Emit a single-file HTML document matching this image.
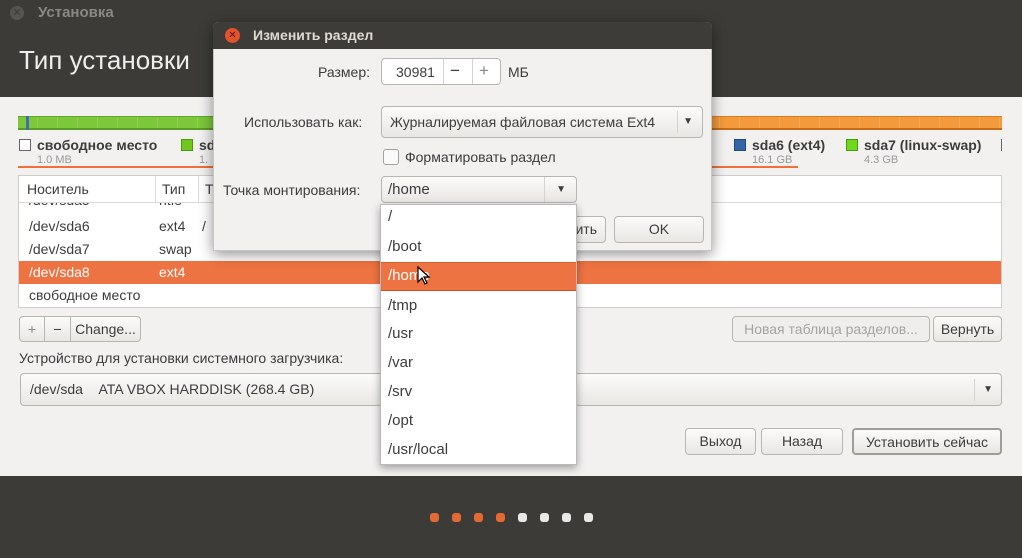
<!DOCTYPE html>
<html><head><meta charset="utf-8"><style>
*{margin:0;padding:0;box-sizing:border-box}
body{width:1022px;height:558px;overflow:hidden;background:#f2f1f0;font-family:"Liberation Sans","DejaVu Sans",sans-serif;font-size:14px;color:#3c3c3c;position:relative}
.a{position:absolute;white-space:nowrap}
.btn{position:absolute;border:1px solid #b9b6b1;border-radius:4px;background:linear-gradient(#fbfbfa,#e9e7e4);text-align:center;font-size:14px;color:#3c3c3c}
.row{position:absolute;left:19px;width:982px;height:23px;line-height:23px}
.it{position:absolute;left:8px;font-size:15px}
</style></head><body>
<div class="a" style="left:0;top:0;width:1022px;height:97px;background:#3c3b37"></div>
<div class="a" style="left:10px;top:6px;width:14px;height:14px;border-radius:50%;background:#56554f;color:#3c3b37;font-size:11px;line-height:14px;text-align:center">✕</div>
<div class="a" style="left:38px;top:4px;color:#8a8884;font-weight:bold;font-size:15px">Установка</div>
<div class="a" style="left:19px;top:45px;color:#eeeeec;font-size:26px">Тип установки</div>

<div class="a" style="left:18px;top:116px;width:200px;height:14px;background:repeating-linear-gradient(90deg,#7cc83a 0 19px,#8fd050 19px 20px);border-top:1px solid #5ea82a;border-bottom:2px solid #5a9a2a"></div>
<div class="a" style="left:26px;top:116px;width:3px;height:14px;background:#3f6db0"></div>
<div class="a" style="left:700px;top:116px;width:302px;height:14px;background:repeating-linear-gradient(90deg,#f39a3c 0 19px,#f5a850 19px 20px);border-top:1px solid #e07c20;border-bottom:2px solid #c66a1a"></div>

<div class="a" style="left:19px;top:139px;width:12px;height:12px;border:1px solid #666;background:#fff"></div>
<div class="a" style="left:37px;top:137px;font-weight:bold;font-size:14px;color:#3c3c3c">свободное место</div>
<div class="a" style="left:37px;top:154px;font-size:11px;color:#999">1.0 MB</div>
<div class="a" style="left:181px;top:139px;width:12px;height:12px;background:#72c71e;border:1px solid #4a9a10"></div>
<div class="a" style="left:199px;top:137px;font-weight:bold">sd</div>
<div class="a" style="left:199px;top:154px;font-size:11px;color:#999">1.</div>
<div class="a" style="left:734px;top:139px;width:12px;height:12px;background:#3465a4;border:1px solid #204a87"></div>
<div class="a" style="left:752px;top:137px;font-weight:bold">sda6 (ext4)</div>
<div class="a" style="left:752px;top:154px;font-size:11px;color:#999">16.1 GB</div>
<div class="a" style="left:846px;top:139px;width:12px;height:12px;background:#72d81e;border:1px solid #4a9a10"></div>
<div class="a" style="left:864px;top:137px;font-weight:bold">sda7 (linux-swap)</div>
<div class="a" style="left:864px;top:154px;font-size:11px;color:#999">4.3 GB</div>
<div class="a" style="left:1001px;top:139px;width:1px;height:12px;background:#666"></div>
<div class="a" style="left:18px;top:166px;width:780px;height:2px;background:#f0703a"></div>

<div class="a" style="left:18px;top:175px;width:984px;height:133px;background:#fff;border:1px solid #cfcdca"></div>
<div class="a" style="left:19px;top:176px;width:982px;height:27px;border-bottom:1px solid #dcdad6"></div>
<div class="a" style="left:155px;top:176px;width:1px;height:27px;background:#dcdad6"></div>
<div class="a" style="left:198px;top:176px;width:1px;height:27px;background:#dcdad6"></div>
<div class="a" style="left:27px;top:181px">Носитель</div>
<div class="a" style="left:162px;top:181px">Тип</div>
<div class="a" style="left:205px;top:181px">Т</div>
<div class="a" style="left:19px;top:203px;width:982px;height:8px;overflow:hidden"><div class="a" style="left:10px;top:-11px">/dev/sda5</div><div class="a" style="left:140px;top:-11px">ntfs</div></div>
<div class="row" style="top:215px"><span class="a" style="left:10px">/dev/sda6</span><span class="a" style="left:140px">ext4</span><span class="a" style="left:183px">/</span></div>
<div class="row" style="top:238px"><span class="a" style="left:10px">/dev/sda7</span><span class="a" style="left:140px">swap</span></div>
<div class="row" style="top:261px;background:#ee7343;color:#fff"><span class="a" style="left:10px">/dev/sda8</span><span class="a" style="left:140px">ext4</span></div>
<div class="row" style="top:284px"><span class="a" style="left:10px">свободное место</span></div>

<div class="btn" style="left:19px;top:316px;width:26px;height:26px;line-height:24px;color:#888;border-radius:4px 0 0 4px">+</div>
<div class="btn" style="left:44px;top:316px;width:27px;height:26px;line-height:24px;border-radius:0">−</div>
<div class="btn" style="left:70px;top:316px;width:71px;height:26px;line-height:24px;border-radius:0 4px 4px 0">Change...</div>
<div class="btn" style="left:732px;top:316px;width:198px;height:26px;line-height:24px;color:#a5a3a0;background:#efeeec">Новая таблица разделов...</div>
<div class="btn" style="left:933px;top:316px;width:69px;height:26px;line-height:24px">Вернуть</div>
<div class="a" style="left:19px;top:350px">Устройство для установки системного загрузчика:</div>
<div class="btn" style="left:20px;top:373px;width:982px;height:33px;text-align:left;line-height:31px;padding-left:9px">/dev/sda&nbsp;&nbsp;&nbsp;&nbsp;ATA VBOX HARDDISK (268.4 GB)<span class="a" style="right:8px;top:0;font-size:10px">▼</span><span class="a" style="right:26px;top:5px;width:1px;height:22px;background:#d5d3cf"></span></div>
<div class="btn" style="left:685px;top:428px;width:71px;height:27px;line-height:25px">Выход</div>
<div class="btn" style="left:761px;top:428px;width:82px;height:27px;line-height:25px">Назад</div>
<div class="btn" style="left:852px;top:428px;width:150px;height:27px;line-height:25px;border:2px solid #a09d98">Установить сейчас</div>

<div class="a" style="left:0;top:476px;width:1022px;height:82px;background:#3c3b37"></div>
<div class="a" style="left:430px;top:513px;width:9px;height:9px;border-radius:3px;background:#e36a33"></div>
<div class="a" style="left:452px;top:513px;width:9px;height:9px;border-radius:3px;background:#e36a33"></div>
<div class="a" style="left:474px;top:513px;width:9px;height:9px;border-radius:3px;background:#e36a33"></div>
<div class="a" style="left:496px;top:513px;width:9px;height:9px;border-radius:3px;background:#e36a33"></div>
<div class="a" style="left:518px;top:513px;width:9px;height:9px;border-radius:3px;background:#e8e8e6"></div>
<div class="a" style="left:540px;top:513px;width:9px;height:9px;border-radius:3px;background:#e8e8e6"></div>
<div class="a" style="left:562px;top:513px;width:9px;height:9px;border-radius:3px;background:#e8e8e6"></div>
<div class="a" style="left:584px;top:513px;width:9px;height:9px;border-radius:3px;background:#e8e8e6"></div>

<!-- dialog -->
<div class="a" style="left:213px;top:22px;width:499px;height:229px;background:#f2f1f0;border-radius:6px 6px 0 0;box-shadow:0 3px 14px rgba(0,0,0,.45);border:1px solid #c8c6c2;border-top:none"></div>
<div class="a" style="left:213px;top:22px;width:499px;height:27px;background:#3d3c38;border-radius:6px 6px 0 0"></div>
<div class="a" style="left:225px;top:28px;width:15px;height:15px;border-radius:50%;background:#e2522c;color:#5a1a0a;font-size:10px;line-height:15px;text-align:center">✕</div>
<div class="a" style="left:253px;top:27px;color:#dfdbd2;font-weight:bold;font-size:14px">Изменить раздел</div>
<div class="a" style="left:318px;top:64px">Размер:</div>
<div class="btn" style="left:381px;top:58px;width:120px;height:27px;background:#fff;border-color:#b9b6b1"></div>
<div class="a" style="left:396px;top:64px">30981</div>
<div class="a" style="left:443px;top:59px;width:1px;height:25px;background:#d5d3cf"></div>
<div class="a" style="left:472px;top:59px;width:1px;height:25px;background:#d5d3cf"></div>
<div class="a" style="left:450px;top:61px;font-size:17px">−</div>
<div class="a" style="left:479px;top:61px;font-size:17px;color:#888">+</div>
<div class="a" style="left:508px;top:64px">МБ</div>
<div class="a" style="left:244px;top:114px">Использовать как:</div>
<div class="btn" style="left:381px;top:106px;width:322px;height:32px;text-align:left;line-height:30px;padding-left:8px">Журналируемая файловая система Ext4<span class="a" style="right:9px;top:0;font-size:10px">▼</span><span class="a" style="right:24px;top:4px;width:1px;height:22px;background:#d5d3cf"></span></div>
<div class="a" style="left:383px;top:149px;width:16px;height:16px;border:1px solid #a5a29d;border-radius:3px;background:#fafafa"></div>
<div class="a" style="left:405px;top:149px">Форматировать раздел</div>
<div class="a" style="left:223px;top:182px">Точка монтирования:</div>
<div class="btn" style="left:381px;top:176px;width:196px;height:27px;text-align:left;line-height:25px;padding-left:6px;font-size:15px">/home<span class="a" style="right:10px;top:0;font-size:10px">▼</span><span class="a" style="right:31px;top:0;width:1px;height:25px;background:#d5d3cf"></span></div>
<div class="btn" style="left:540px;top:216px;width:66px;height:27px;line-height:25px;text-align:right;padding-right:8px">ить</div>
<div class="btn" style="left:614px;top:216px;width:90px;height:27px;line-height:25px">OK</div>

<!-- popup -->
<div class="a" style="left:380px;top:204px;width:197px;height:261px;background:#fff;border:1px solid #bcbab6;box-shadow:0 3px 8px rgba(0,0,0,.35)"></div>
<div class="a" style="left:381px;top:262px;width:195px;height:29px;background:#ee7343;border-top:1px solid #d75f30;border-bottom:1px solid #c8552a"></div>
<div class="a" style="left:388px;top:208px;font-size:15px">/</div>
<div class="a" style="left:388px;top:238px;font-size:15px">/boot</div>
<div class="a" style="left:388px;top:267px;font-size:15px;color:#fff">/home</div>
<div class="a" style="left:388px;top:297px;font-size:15px">/tmp</div>
<div class="a" style="left:388px;top:325px;font-size:15px">/usr</div>
<div class="a" style="left:388px;top:354px;font-size:15px">/var</div>
<div class="a" style="left:388px;top:383px;font-size:15px">/srv</div>
<div class="a" style="left:388px;top:412px;font-size:15px">/opt</div>
<div class="a" style="left:388px;top:441px;font-size:15px">/usr/local</div>
<svg class="a" style="left:417px;top:266px" width="14" height="20" viewBox="0 0 14 20"><path d="M1 1 L1 16 L5 12 L8 18 L10 17 L7 11 L12 11 Z" fill="#fff" stroke="#000" stroke-width="1.2"/></svg>
</body></html>
